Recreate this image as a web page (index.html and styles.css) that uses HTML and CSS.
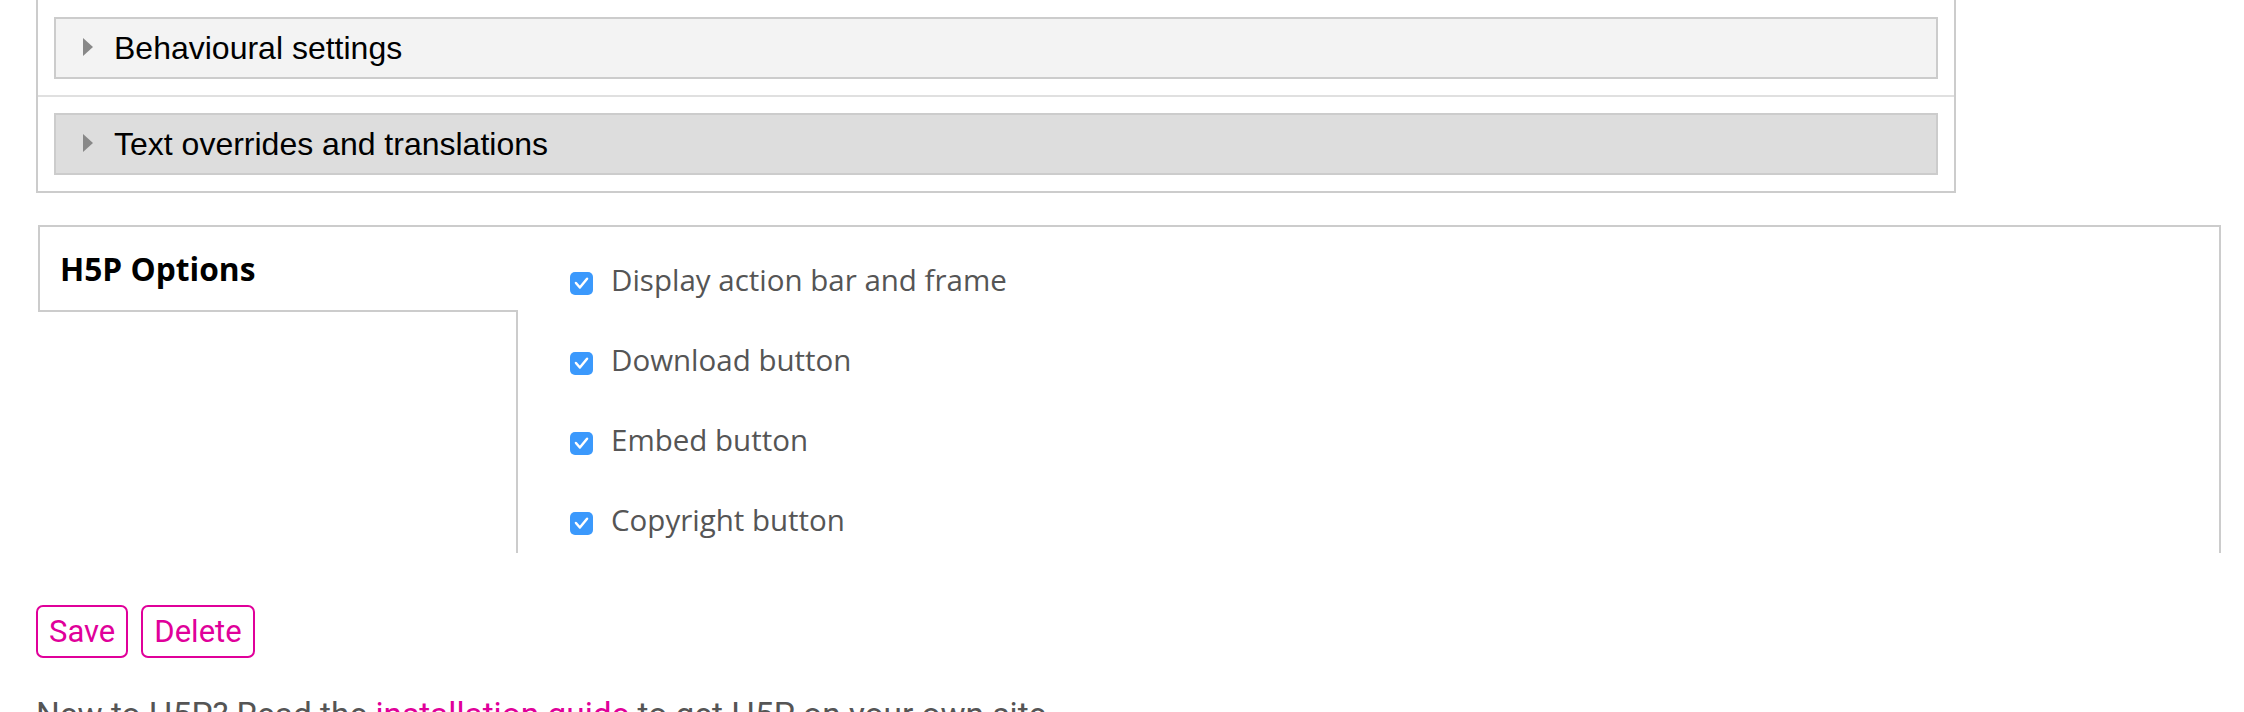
FILE: index.html
```html
<!DOCTYPE html>
<html lang="en">
<head>
<meta charset="utf-8">
<title>H5P editor</title>
<link rel="stylesheet" href="styles.css">
</head>
<body>
<div class="page">
  <div class="semantics">
    <div class="field">
      <div class="group">
        <span class="arrow"></span>
        <span class="group-title">Behavioural settings</span>
      </div>
    </div>
    <div class="field">
      <div class="group group-active">
        <span class="arrow"></span>
        <span class="group-title">Text overrides and translations</span>
      </div>
    </div>
  </div>

  <div class="options">
    <div class="tabs">
      <div class="tab">H5P Options</div>
    </div>
    <div class="pane">
      <label class="row"><span class="check"><svg viewBox="0 0 24 24" width="23" height="23"><polyline points="6.2,11.5 10.3,16.2 17.8,7" fill="none" stroke="#fff" stroke-width="2.6" stroke-linecap="round" stroke-linejoin="round"/></svg></span><span class="label">Display action bar and frame</span></label>
      <label class="row"><span class="check"><svg viewBox="0 0 24 24" width="23" height="23"><polyline points="6.2,11.5 10.3,16.2 17.8,7" fill="none" stroke="#fff" stroke-width="2.6" stroke-linecap="round" stroke-linejoin="round"/></svg></span><span class="label">Download button</span></label>
      <label class="row"><span class="check"><svg viewBox="0 0 24 24" width="23" height="23"><polyline points="6.2,11.5 10.3,16.2 17.8,7" fill="none" stroke="#fff" stroke-width="2.6" stroke-linecap="round" stroke-linejoin="round"/></svg></span><span class="label">Embed button</span></label>
      <label class="row"><span class="check"><svg viewBox="0 0 24 24" width="23" height="23"><polyline points="6.2,11.5 10.3,16.2 17.8,7" fill="none" stroke="#fff" stroke-width="2.6" stroke-linecap="round" stroke-linejoin="round"/></svg></span><span class="label">Copyright button</span></label>
    </div>
  </div>

  <div class="actions">
    <button class="btn" type="button">Save</button>
    <button class="btn" type="button">Delete</button>
  </div>

  <p class="note">New to H5P? Read the <a href="#" class="link">installation guide</a> to get H5P on your own site.</p>
</div>
</body>
</html>
```
FILE: styles.css
```css
html, body {
  margin: 0;
  padding: 0;
  background: #fff;
}

body {
  font-family: "Roboto", "Liberation Sans", sans-serif;
  overflow: hidden;
  height: 712px;
}

.page {
  padding-left: 36px;
}

.semantics {
  width: 1920px;
  box-sizing: border-box;
  border: 2px solid #cccccc;
  border-top: none;
}

.field {
  padding: 16px 16px 16px;
}

.field:first-child {
  padding-top: 17px;
  border-bottom: 2px solid #e0e0e0;
}

.group {
  display: flex;
  align-items: center;
  height: 62px;
  box-sizing: border-box;
  border: 2px solid #cccccc;
  background: #f3f3f3;
  padding-left: 27px;
}

.group-active {
  background: #dddddd;
}

.arrow {
  width: 0;
  height: 0;
  border-left: 10px solid #888888;
  border-top: 9px solid transparent;
  border-bottom: 9px solid transparent;
  margin-right: 21px;
  margin-top: -2px;
}

.group-title {
  font-family: "Liberation Sans", Arial, sans-serif;
  font-size: 32px;
  color: #000;
  line-height: 40px;
}

.options {
  display: flex;
  margin-top: 32px;
  margin-left: 2px;
  width: 2183px;
  height: 328px;
  box-sizing: border-box;
  border-top: 2px solid #cccccc;
  border-right: 2px solid #cccccc;
  overflow: hidden;
}

.tabs {
  width: 480px;
  flex: none;
  box-sizing: border-box;
  border-right: 2px solid #cccccc;
}

.tab {
  margin-right: -2px;
  box-sizing: border-box;
  height: 85px;
  border-left: 2px solid #cccccc;
  border-bottom: 2px solid #cccccc;
  background: #fff;
  padding: 20px 0 0 20px;
  font-family: "Open Sans", sans-serif;
  font-weight: 700;
  font-size: 31.7px;
  line-height: 44px;
  color: #000;
  position: relative;
}

.pane {
  flex: 1;
  padding: 13px 0 0 52px;
}

.row {
  display: flex;
  align-items: center;
  height: 80px;
}

.check {
  width: 23px;
  height: 23px;
  flex: none;
  border-radius: 5px;
  background: #3b99fc;
  margin-top: 6px;
  margin-right: 18px;
  display: flex;
}

.label {
  font-family: "Open Sans", sans-serif;
  font-size: 29.5px;
  color: #555555;
  line-height: 40px;
}

.actions {
  display: flex;
  gap: 13px;
  margin-top: 52px;
}

.btn {
  font-family: "Roboto", "Liberation Sans", sans-serif;
  font-size: 31px;
  color: #e0009a;
  background: #fff;
  border: 2px solid #e0009a;
  border-radius: 7px;
  height: 53px;
  padding: 0 11px;
  line-height: 49px;
  margin: 0;
}

.note {
  margin: 34px 0 0 0;
  font-size: 33.4px;
  line-height: 46px;
  color: #555555;
}

.link {
  color: #e0009a;
  text-decoration: none;
}
```
